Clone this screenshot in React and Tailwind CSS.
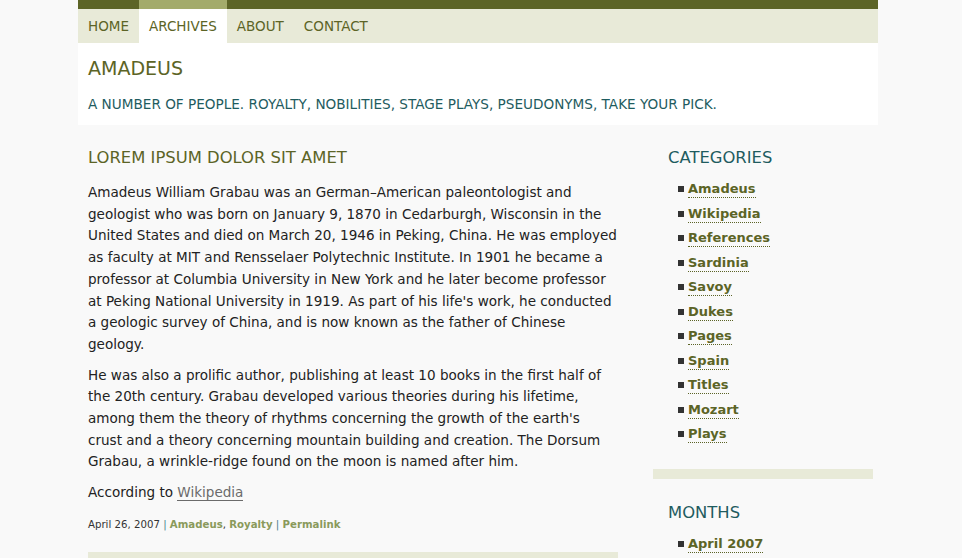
import React from 'react';

const font = { fontFamily: '"Lucida Grande", "DejaVu Sans", sans-serif' };

const nav = ['Home', 'Archives', 'About', 'Contact'];

const categories = [
  'Amadeus', 'Wikipedia', 'References', 'Sardinia', 'Savoy', 'Dukes',
  'Pages', 'Spain', 'Titles', 'Mozart', 'Plays',
];

const SideList = ({ items }) => (
  <ul className="mt-[8px] pl-[25px]">
    {items.map((item) => (
      <li key={item} className="flex items-center h-[24.5px]">
        <span className="w-[6px] h-[6px] bg-[#333] mr-[4px] shrink-0"></span>
        <a href="#" className="font-bold text-[13px] text-[#5c6426] border-b border-dotted border-[#5c6426] leading-[17px]">
          {item}
        </a>
      </li>
    ))}
  </ul>
);

export default function App() {
  return (
    <div className="h-[558px] overflow-hidden bg-[#f9f9f9] text-[#222]" style={font}>
      <div className="w-[800px] ml-[78px]">
        {/* Nav */}
        <div className="border-t-[9px] border-[#5c6426] bg-[#e8ead8] flex h-[43px]">
          {nav.map((n) => {
            const active = n === 'Archives';
            return (
              <a
                key={n}
                href="#"
                className={`px-[10px] flex items-center uppercase text-[13.5px] text-[#5c6426] ${
                  active ? 'bg-white relative' : ''
                }`}
              >
                {active && <span className="absolute left-0 right-0 -top-[9px] h-[9px] bg-[#a3ab6b]"></span>}
                {n}
              </a>
            );
          })}
        </div>

        {/* Header */}
        <div className="bg-white h-[82px] px-[10px] pt-[12px]">
          <h1 className="text-[19px] text-[#5c6426] uppercase leading-[26px]">Amadeus</h1>
          <p className="mt-[14px] text-[13.6px] text-[#1f5c5f] uppercase leading-[18px]">
            A number of people. Royalty, nobilities, stage plays, pseudonyms, take your pick.
          </p>
        </div>

        {/* Body */}
        <div className="flex">
          <div className="w-[530px] ml-[10px] pt-[22px]">
            <h2 className="text-[16.4px] uppercase text-[#5c6426] leading-[22px]">Lorem ipsum dolor sit amet</h2>
            <div className="mt-[13px] w-[530px] text-[13.55px] leading-[21.7px] text-[#222]">
              <p>
                Amadeus William Grabau was an German–American paleontologist and geologist who was born on
                January 9, 1870 in Cedarburgh, Wisconsin in the United States and died on March 20, 1946 in
                Peking, China. He was employed as faculty at MIT and Rensselaer Polytechnic Institute. In 1901
                he became a professor at Columbia University in New York and he later become professor at
                Peking National University in 1919. As part of his life's work, he conducted a geologic
                survey of China, and is now known as the father of Chinese geology.
              </p>
              <p className="mt-[9px]">
                He was also a prolific author, publishing at least 10 books in the first half of the 20th
                century. Grabau developed various theories during his lifetime, among them the theory of
                rhythms concerning the growth of the earth's crust and a theory concerning mountain building
                and creation. The Dorsum Grabau, a wrinkle-ridge found on the moon is named after him.
              </p>
              <p className="mt-[9px]">
                According to{' '}
                <a href="#" className="text-[#6b6b6b] border-b border-[#6b6b6b]">Wikipedia</a>
              </p>
            </div>
            <p className="mt-[13px] text-[10.2px] text-[#333]">
              April 26, 2007 <span className="text-[#4a7f8c]">|</span>{' '}
              <a href="#" className="font-bold text-[#8a9a5b]">Amadeus</a>,{' '}
              <a href="#" className="font-bold text-[#8a9a5b]">Royalty</a>{' '}
              <span className="text-[#4a7f8c]">|</span>{' '}
              <a href="#" className="font-bold text-[#8a9a5b]">Permalink</a>
            </p>
            <div className="mt-[20px] h-[8px] bg-[#e8ead8]"></div>
          </div>

          <div className="w-[220px] ml-[35px] pt-[22px]">
            <h3 className="pl-[15px] text-[16.4px] uppercase text-[#1f5c5f] leading-[22px]">Categories</h3>
            <SideList items={categories} />
            <div className="mt-[22px] h-[10px] bg-[#e8ead8]"></div>
            <h3 className="mt-[23px] pl-[15px] text-[16.4px] uppercase text-[#1f5c5f] leading-[22px]">Months</h3>
            <SideList items={['April 2007']} />
          </div>
        </div>
      </div>
    </div>
  );
}
